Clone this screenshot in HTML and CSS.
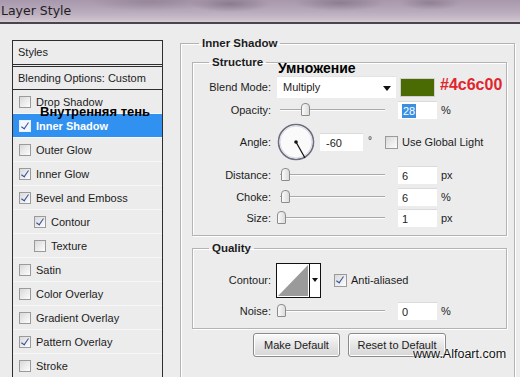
FILE: index.html
```html
<!DOCTYPE html>
<html lang="ru">
<head>
    <meta charset="UTF-8">
    <title>Layer Style</title>
    <link rel="stylesheet" href="styles.css">
</head>
<body>
<div class="window">
    <div class="titlebar">Layer Style</div>

    <div class="dialog">
        <div class="styles-list">
            <div class="head">Styles</div>
            <div class="head blending">Blending Options: Custom</div>
            <div class="item"><span class="cb"></span>Drop Shadow</div>
            <div class="item selected"><span class="cb on"></span>Inner Shadow</div>
            <div class="item"><span class="cb"></span>Outer Glow</div>
            <div class="item"><span class="cb on"></span>Inner Glow</div>
            <div class="item"><span class="cb on"></span>Bevel and Emboss</div>
            <div class="item sub"><span class="cb on"></span>Contour</div>
            <div class="item sub"><span class="cb"></span>Texture</div>
            <div class="item"><span class="cb"></span>Satin</div>
            <div class="item"><span class="cb"></span>Color Overlay</div>
            <div class="item"><span class="cb"></span>Gradient Overlay</div>
            <div class="item"><span class="cb on"></span>Pattern Overlay</div>
            <div class="item"><span class="cb"></span>Stroke</div>
        </div>

        <fieldset class="group outer">
            <legend>Inner Shadow</legend>

            <fieldset class="group inner structure">
                <legend>Structure</legend>
                <div class="row row-blend">
                    <label>Blend Mode:</label>
                    <div class="select">Multiply<span class="arrow"></span></div>
                    <span class="swatch"></span>
                </div>
                <div class="row row-opacity">
                    <label>Opacity:</label>
                    <div class="slider"><span class="thumb" style="left: 24px"></span></div>
                    <div class="field"><span class="picked">28</span></div>
                    <span class="unit">%</span>
                </div>
                <div class="row row-angle">
                    <label>Angle:</label>
                    <svg class="dial" width="38" height="38" viewBox="0 0 38 38">
                        <circle cx="19" cy="19" r="17.5" fill="#fafafa" stroke="#6d6d82" stroke-width="1.6"/>
                        <circle cx="19" cy="19" r="16" fill="none" stroke="#d8d8e0" stroke-width="1"/>
                        <line x1="19" y1="19" x2="28" y2="35" stroke="#111" stroke-width="1.3"/>
                        <circle cx="19" cy="19" r="1.8" fill="#111"/>
                    </svg>
                    <div class="field wide">-60</div>
                    <span class="degree">°</span>
                    <span class="cb big"></span>
                    <span class="check-label">Use Global Light</span>
                </div>
                <div class="row row-distance">
                    <label>Distance:</label>
                    <div class="slider"><span class="thumb" style="left: 4px"></span></div>
                    <div class="field">6</div>
                    <span class="unit">px</span>
                </div>
                <div class="row row-choke">
                    <label>Choke:</label>
                    <div class="slider"><span class="thumb" style="left: 4px"></span></div>
                    <div class="field">6</div>
                    <span class="unit">%</span>
                </div>
                <div class="row row-size">
                    <label>Size:</label>
                    <div class="slider"><span class="thumb" style="left: 0"></span></div>
                    <div class="field">1</div>
                    <span class="unit">px</span>
                </div>
            </fieldset>

            <fieldset class="group inner quality">
                <legend>Quality</legend>
                <div class="row row-contour">
                    <label>Contour:</label>
                    <div class="contour">
                        <svg width="32" height="33" viewBox="0 0 32 33">
                            <rect width="32" height="33" fill="#fff"/>
                            <polygon points="1,32 31,1 31,32" fill="#9a9a9a"/>
                        </svg>
                        <span class="drop"><span class="arrow small"></span></span>
                    </div>
                    <span class="cb big on"></span>
                    <span class="check-label">Anti-aliased</span>
                </div>
                <div class="row row-noise">
                    <label>Noise:</label>
                    <div class="slider"><span class="thumb" style="left: 0"></span></div>
                    <div class="field">0</div>
                    <span class="unit">%</span>
                </div>
            </fieldset>

            <div class="buttons">
                <button class="btn make">Make Default</button>
                <button class="btn reset">Reset to Default</button>
            </div>
        </fieldset>
    </div>

    <div class="note note-shadow">Внутренняя тень</div>
    <div class="note note-mode">Умножение</div>
    <div class="note note-color">#4c6c00</div>
    <div class="watermark">www.Alfoart.com</div>
</div>
</body>
</html>
```
FILE: styles.css
```css
html, body {
    margin: 0;
    overflow: hidden;
}
body {
    background: #ececec;
    font-family: "Liberation Sans", Arial, sans-serif;
    font-size: 11px;
    color: #1c1c1c;
}
.window {
    width: 520px;
    height: 377px;
    overflow: hidden;
    position: relative;
}
.titlebar {
    height: 22px;
    line-height: 21px;
    padding-left: 1px;
    font-family: "DejaVu Sans", sans-serif;
    font-size: 12.5px;
    color: #1e1e1e;
    border-bottom: 2px solid #4a4450;
    background:
        radial-gradient(ellipse 40px 8px at 230px 4px, rgba(110, 95, 115, 0.55), transparent),
        radial-gradient(ellipse 45px 8px at 340px 3px, rgba(110, 95, 115, 0.5), transparent),
        radial-gradient(ellipse 30px 7px at 430px 3px, rgba(110, 95, 115, 0.45), transparent),
        radial-gradient(ellipse 60px 9px at 150px 2px, rgba(120, 105, 125, 0.4), transparent),
        linear-gradient(#a798ab, #b9abbc 55%, #c8bdc8 85%, #d6ccd5);
}
.dialog {
    display: flex;
    align-items: flex-start;
    padding: 16px 0 0 12px;
    gap: 17px;
}

/* styles list */
.styles-list {
    width: 149px;
    height: 340px;
    border: 1px solid #2e2e2e;
    border-bottom: none;
    flex: none;
}
.head {
    height: 23px;
    line-height: 23px;
    padding-left: 5px;
    border-bottom: 1px solid #2e2e2e;
}
.blending {
    margin-top: 1px;
    border-top: 1px solid #2e2e2e;
    height: 22px;
    line-height: 22px;
}
.item {
    height: 23px;
    display: flex;
    align-items: center;
    padding-left: 6px;
    border-bottom: 1px solid #f7f7f7;
}
.item.sub {
    padding-left: 21px;
}
.item.selected {
    background: #3191f0;
    color: #fff;
    font-weight: bold;
}
.cb {
    width: 10px;
    height: 10px;
    border: 1px solid #9a9a9a;
    background: linear-gradient(135deg, #d9d9d9, #fdfdfd);
    margin-right: 5px;
    position: relative;
    flex: none;
}
.cb.on::after {
    content: "";
    position: absolute;
    left: 3px;
    top: 0;
    width: 3px;
    height: 7px;
    border: solid #34509e;
    border-width: 0 1.5px 1.5px 0;
    transform: rotate(35deg);
}
.selected .cb {
    border-color: #e8f0ff;
    background: #f4f7ff;
}
.cb.big {
    width: 11px;
    height: 11px;
    margin-left: 13px;
    margin-right: 4px;
}

/* groups */
.group {
    margin: 0;
    padding: 0;
    border: 1px solid #b3b3b3;
    box-shadow: inset 1px 1px 0 #fff, 1px 1px 0 #fff;
}
.group legend {
    font-weight: bold;
    font-size: 11.5px;
    padding: 0 3px;
    margin-left: 18px;
    line-height: 13px;
}
.outer {
    width: 333px;
    height: 345px;
    margin-top: -3px;
    border-bottom: none;
}
.inner {
    margin: 6px 0 0 11px;
    width: 313px;
}
.inner legend {
    margin-left: 16px;
}
.structure {
    padding: 7px 0 8px 0;
}
.quality {
    margin-top: 6px;
    padding: 7px 0 8px 0;
}

/* rows */
.row {
    display: flex;
    align-items: center;
}
.row label {
    width: 78px;
    text-align: right;
    margin-right: 6px;
    flex: none;
}
.row-blend { height: 22px; }
.row-opacity { height: 20px; margin-top: 2px; }
.row-angle { height: 38px; margin-top: 3px; }
.row-distance { height: 18px; margin-top: 5px; }
.row-choke { height: 18px; margin-top: 4px; }
.row-size { height: 18px; margin-top: 3px; }
.row-contour { height: 36px; }
.row-noise { height: 18px; margin-top: 4px; }

.select {
    width: 113px;
    height: 21px;
    line-height: 21px;
    padding-left: 6px;
    background: #fff;
    border-top: 1px solid #e3e3e3;
    position: relative;
}
.arrow {
    position: absolute;
    right: 5px;
    top: 9px;
    border: 4px solid transparent;
    border-top: 5px solid #111;
    border-bottom: none;
}
.swatch {
    width: 33px;
    height: 17px;
    margin-left: 5px;
    background: #4a6a04;
    box-shadow: 0 0 0 1px #d0d0d0;
}
.slider {
    width: 116px;
    height: 16px;
    position: relative;
    flex: none;
}
.slider::before {
    content: "";
    position: absolute;
    left: 3px;
    right: 8px;
    top: 7px;
    height: 1px;
    background: #a9a9a9;
    border-bottom: 1px solid #fdfdfd;
}
.thumb {
    position: absolute;
    top: 1px;
    width: 7px;
    height: 11px;
    border: 1px solid #8c8c8c;
    border-radius: 4px 4px 1px 1px;
    background: linear-gradient(90deg, #fafafa, #dcdcdc);
}
.field {
    height: 18px;
    line-height: 18px;
    padding-left: 4px;
    margin-left: 5px;
    background: #fff;
    border-top: 1px solid #dadada;
    box-sizing: border-box;
    width: 39px;
}
.field.wide {
    width: 43px;
    padding-left: 6px;
}
.picked {
    background: #3b8fe0;
    color: #fff;
    padding: 1px 1px;
}
.unit {
    margin-left: 4px;
}
.degree {
    margin-left: 5px;
    font-size: 10px;
    align-self: flex-start;
    margin-top: 12px;
}
.check-label {
    white-space: nowrap;
}
.contour {
    display: flex;
    border: 1.5px solid #111;
    height: 33px;
    margin-left: -1px;
}
.contour .drop {
    width: 10px;
    background: #fff;
    border-left: 1px solid #111;
    position: relative;
}
.arrow.small {
    right: 2px;
    top: 14px;
    border-width: 3px;
    border-top-width: 4px;
    border-bottom: none;
}

/* buttons */
.buttons {
    display: flex;
    gap: 8px;
    padding: 4px 0 0 72px;
}
.btn {
    font-family: "Liberation Sans", Arial, sans-serif;
    font-size: 11px;
    color: #1c1c1c;
    height: 24px;
    border: 1px solid #8a8a8a;
    border-radius: 3px;
    background: linear-gradient(#fbfbfb, #e6e6e6 50%, #d6d6d6);
    box-shadow: inset 0 0 0 1px #fff;
    padding: 0;
}
.make { width: 87px; }
.reset { width: 98px; }

/* annotations on top of the screenshot */
.note {
    position: absolute;
    font-weight: bold;
    font-size: 14px;
    color: #000;
    white-space: nowrap;
}
.note-shadow {
    left: 40px;
    top: 104px;
    font-size: 13px;
}
.note-mode {
    left: 278px;
    top: 60px;
}
.note-color {
    left: 440px;
    top: 76px;
    font-size: 16px;
    color: #e0262c;
}
.watermark {
    position: absolute;
    left: 413px;
    top: 347px;
    font-size: 12.5px;
    color: #111;
    text-shadow: 0 0 2px #fff, 0 0 2px #fff;
}
```
